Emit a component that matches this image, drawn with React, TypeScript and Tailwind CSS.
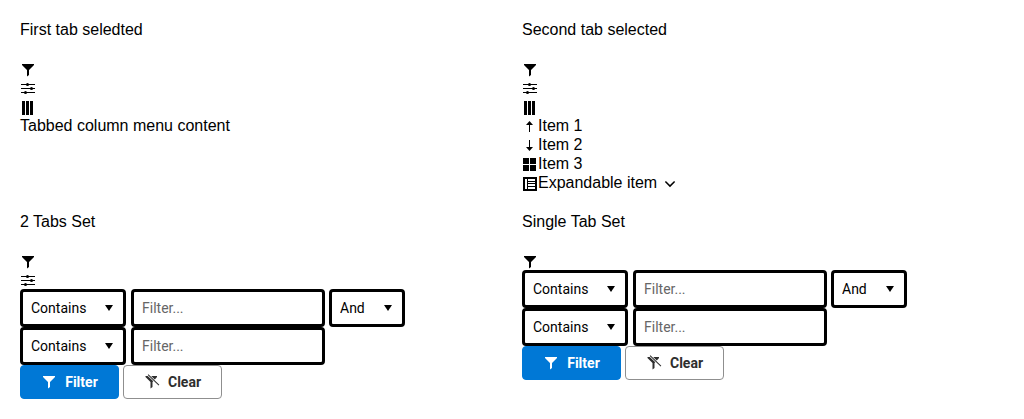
import { useState, type ReactNode } from "react";

function Icon({ children }: { children: ReactNode }) {
  return (
    <svg viewBox="0 0 16 16" className="size-4 shrink-0 fill-current" aria-hidden="true">
      {children}
    </svg>
  );
}

const FilterIcon = () => (
  <Icon>
    <path d="M2 2v1l5 5v6.500l2-1.500V8l5-5V2z" />
  </Icon>
);

const FilterClearIcon = () => (
  <Icon>
    <path d="M1.500 2v1L6.500 8v6.500l2-1.500V8l.8-.8L3.700 2zM7.200 2l3.600 3.400L13 3V2zM3.700.9l.7-.7L15.300 10.700l-.7.7z" />
  </Icon>
);

const SlidersIcon = () => (
  <Icon>
    <path d="M1 3h14v1H1zM1 7h14v1H1zM1 11h14v1H1z" />
    <circle cx="7.500" cy="3.500" r="1.500" />
    <circle cx="11.500" cy="7.500" r="1.500" />
    <circle cx="5.500" cy="11.500" r="1.500" />
  </Icon>
);

const ColumnsIcon = () => (
  <Icon>
    <path d="M2 1h3v14H2zM6 1h3v14H6zM10 1h3v14h-3z" />
  </Icon>
);

const SortAscIcon = () => (
  <Icon>
    <path d="M7 13V6H4l3.500-4L11 6H8v7z" />
  </Icon>
);

const SortDescIcon = () => (
  <Icon>
    <path d="M7 2v7H4l3.500 4L11 9H8V2z" />
  </Icon>
);

const GridIcon = () => (
  <Icon>
    <path d="M1 1h6v6H1zM8 1h6v6H8zM1 8h6v6H1zM8 8h6v6H8z" />
  </Icon>
);

const FormIcon = () => (
  <Icon>
    <path
      fillRule="evenodd"
      d="M1 1h14v14H1zM3 3v10h2V3zM6 3v2h7V3zM6 6v1h7V6zM6 8v2h7V8zM6 11v2h7v-2z"
    />
  </Icon>
);

const ChevronIcon = () => (
  <Icon>
    <path d="M3.400 5.500 8 10.100 12.600 5.500" fill="none" stroke="currentColor" strokeWidth="1.500" />
  </Icon>
);

type Tab = "filter" | "settings" | "columns";

const tabIcons: Record<Tab, ReactNode> = {
  filter: <FilterIcon />,
  settings: <SlidersIcon />,
  columns: <ColumnsIcon />,
};

function ColumnMenu({ title, tabs, children }: { title: string; tabs: Tab[]; children: ReactNode }) {
  return (
    <section>
      <h2 className="mb-5 h-[19px] leading-[19px]">{title}</h2>
      <div className="flex flex-col items-start">
        {tabs.map((tab) => (
          <button key={tab} type="button" aria-label={tab} className="flex h-[19px] items-end">
            {tabIcons[tab]}
          </button>
        ))}
      </div>
      {children}
    </section>
  );
}

function MenuItem({ icon, label, after }: { icon: ReactNode; label: string; after?: ReactNode }) {
  return (
    <li>
      <button type="button" className="flex h-[19px] items-end leading-[19px]">
        {icon}
        <span>{label}</span>
        {after && <span className="ml-[5px]">{after}</span>}
      </button>
    </li>
  );
}

function Dropdown({ label, options, className }: { label: string; options: string[]; className: string }) {
  return (
    <div className={`relative ${className}`}>
      <select
        aria-label={label}
        className="h-[38px] w-full appearance-none rounded border-3 border-black bg-white pl-2 pr-7 text-black"
      >
        {options.map((option) => (
          <option key={option}>{option}</option>
        ))}
      </select>
      <svg
        viewBox="0 0 16 16"
        className="pointer-events-none absolute right-[9px] top-[11px] size-4 fill-black"
        aria-hidden="true"
      >
        <path d="M4 5h8l-4 6z" />
      </svg>
    </div>
  );
}

const operators = ["Contains", "Does not contain", "Starts with", "Ends with"];

function FilterRow({ name, logic }: { name: string; logic?: boolean }) {
  const [value, setValue] = useState("");
  return (
    <div className="flex">
      <Dropdown label={`${name} operator`} options={operators} className="mr-[5px] w-[106px]" />
      <input
        type="text"
        aria-label={`${name} value`}
        placeholder="Filter..."
        value={value}
        onChange={(event) => setValue(event.target.value)}
        className="mr-1 h-[38px] w-[194px] rounded border-3 border-black px-2 placeholder:text-[#666666]"
      />
      {logic && <Dropdown label="Logic" options={["And", "Or"]} className="w-[76px]" />}
    </div>
  );
}

function FilterForm() {
  return (
    <form className="font-[Roboto,sans-serif] text-sm" onSubmit={(event) => event.preventDefault()}>
      <FilterRow name="First" logic />
      <FilterRow name="Second" />
      <div className="flex gap-1 font-bold">
        <button
          type="submit"
          className="flex h-[34px] w-[99px] items-center justify-center gap-2 rounded border border-[#0078d6] bg-[#0078d6] text-white"
        >
          <FilterIcon />
          Filter
        </button>
        <button
          type="reset"
          className="flex h-[34px] w-[99px] items-center justify-center gap-2 rounded border border-[#8f8f8f] bg-white text-[#2e2e2e]"
        >
          <FilterClearIcon />
          Clear
        </button>
      </div>
    </form>
  );
}

export default function App() {
  return (
    <main className="grid grid-cols-2 gap-5 bg-white p-5 font-['Liberation_Sans',Arial,sans-serif] text-base text-black">
      <ColumnMenu title="First tab seledted" tabs={["filter", "settings", "columns"]}>
        <p className="leading-[19px]">Tabbed column menu content</p>
      </ColumnMenu>
      <ColumnMenu title="Second tab selected" tabs={["filter", "settings", "columns"]}>
        <ul>
          <MenuItem icon={<SortAscIcon />} label="Item 1" />
          <MenuItem icon={<SortDescIcon />} label="Item 2" />
          <MenuItem icon={<GridIcon />} label="Item 3" />
          <MenuItem icon={<FormIcon />} label="Expandable item" after={<ChevronIcon />} />
        </ul>
      </ColumnMenu>
      <ColumnMenu title="2 Tabs Set" tabs={["filter", "settings"]}>
        <FilterForm />
      </ColumnMenu>
      <ColumnMenu title="Single Tab Set" tabs={["filter"]}>
        <FilterForm />
      </ColumnMenu>
    </main>
  );
}
